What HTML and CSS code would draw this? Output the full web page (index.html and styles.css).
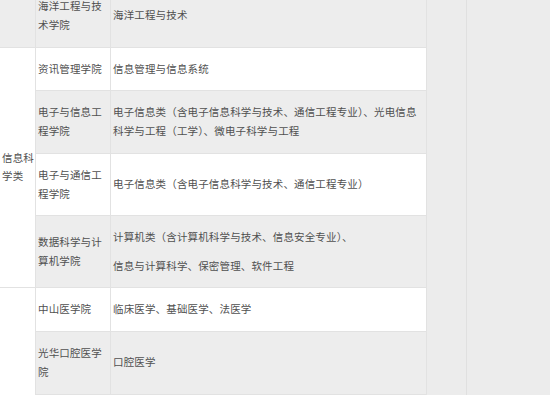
FILE: index.html
```html
<!DOCTYPE html>
<html lang="zh">
<head>
<meta charset="utf-8">
<link rel="stylesheet" href="styles.css">
</head>
<body>
<div class="page">
  <table class="majors">
    <colgroup>
      <col class="c1">
      <col class="c2">
      <col class="c3">
    </colgroup>
    <tbody>
      <tr>
        <td class="cat"></td>
        <td>海洋工程与技术学院</td>
        <td>海洋工程与技术</td>
      </tr>
      <tr>
        <td class="cat" rowspan="4">信息科学类</td>
        <td>资讯管理学院</td>
        <td>信息管理与信息系统</td>
      </tr>
      <tr>
        <td>电子与信息工程学院</td>
        <td>电子信息类（含电子信息科学与技术、通信工程专业）、光电信息科学与工程（工学）、微电子科学与工程</td>
      </tr>
      <tr>
        <td>电子与通信工程学院</td>
        <td>电子信息类（含电子信息科学与技术、通信工程专业）</td>
      </tr>
      <tr>
        <td>数据科学与计算机学院</td>
        <td><div class="para">计算机类（含计算机科学与技术、信息安全专业）、</div><div class="para">信息与计算科学、保密管理、软件工程</div></td>
      </tr>
      <tr>
        <td class="cat" rowspan="5">医学类</td>
        <td>中山医学院</td>
        <td>临床医学、基础医学、法医学</td>
      </tr>
      <tr>
        <td>光华口腔医学院</td>
        <td>口腔医学</td>
      </tr>
      <tr>
        <td>公共卫生学院</td>
        <td>预防医学</td>
      </tr>
      <tr>
        <td>药学院</td>
        <td>药学</td>
      </tr>
      <tr>
        <td>护理学院</td>
        <td>护理学</td>
      </tr>
    </tbody>
  </table>
  <div class="rail"></div>
  <div class="rest"></div>
</div>
</body>
</html>
```

FILE: styles.css
```css
html, body {
  margin: 0;
  padding: 0;
  background: #ececec;
  overflow: hidden;
}
body {
  font-family: "Noto Sans CJK SC", "Noto Sans", sans-serif;
  font-size: 10.5px;
  color: #505050;
}
.page {
  display: flex;
  align-items: flex-start;
  margin-top: -16px;
  margin-left: -1px;
}
.majors {
  border-collapse: collapse;
  table-layout: fixed;
  width: 427px;
  flex: none;
}
.c1 { width: 36px; }
.c2 { width: 75px; }
.c3 { width: 316px; }
.majors td {
  border: 1px solid #e2e2e2;
  padding: 12px 2px 12px 2px;
  line-height: 18.75px;
  letter-spacing: 0.15px;
  vertical-align: middle;
  text-align: left;
  background: #ffffff;
}
.majors tr:nth-child(odd) td {
  background: #ededed;
}
.majors td.cat {
  background: #ffffff;
  padding-right: 0;
  padding-left: 2px;
}
.majors tr:first-child td.cat {
  background: #ededed;
}
.para + .para {
  margin-top: 9.5px;
}
.rail {
  flex: none;
  width: 39px;
  align-self: stretch;
  border-right: 1px solid #e0e0e0;
}
.rest {
  flex: 1;
}
```
